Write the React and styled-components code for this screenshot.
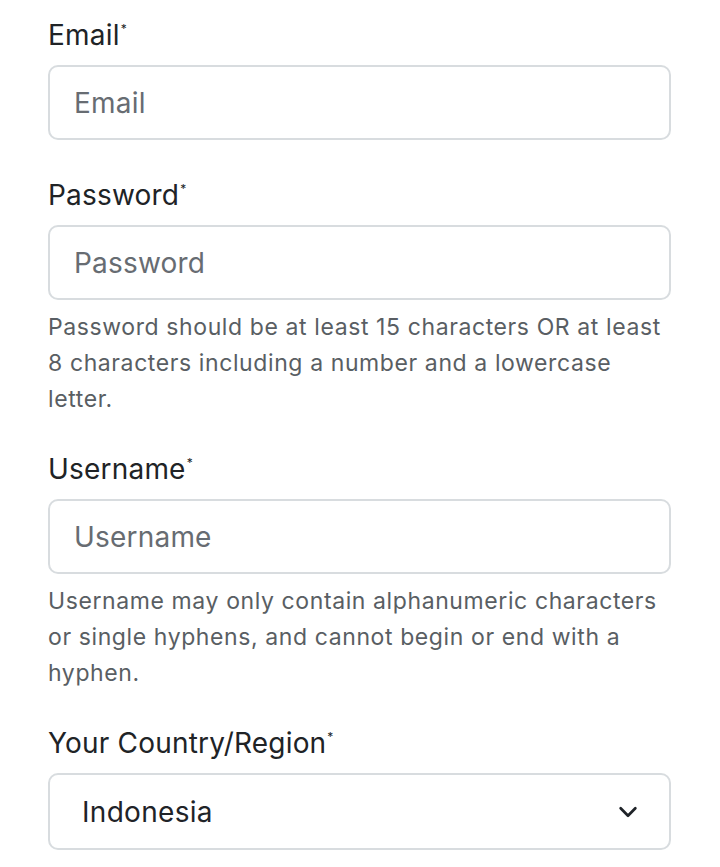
import React from 'react';
import styled, { createGlobalStyle } from 'styled-components';

const GlobalStyle = createGlobalStyle`
  body {
    margin: 0;
    background: #ffffff;
    font-family: Inter, "Noto Sans", sans-serif;
    color: #1f2328;
  }
`;

const Form = styled.form`
  width: 623px;
  padding: 18px 0 0 48px;
  display: flex;
  flex-direction: column;
`;

const Field = styled.div`
  display: flex;
  flex-direction: column;
  margin-bottom: ${p => (p.hint ? '35px' : '38px')};
`;

const Label = styled.label`
  font-size: 28px;
  line-height: 34px;
  letter-spacing: 0.2px;
  color: #202326;
  margin-bottom: 13px;
`;

const Star = styled.sup`
  font-size: 12px;
  vertical-align: top;
  position: relative;
  top: -6px;
  margin-left: 1px;
`;

const Input = styled.input`
  box-sizing: border-box;
  width: 100%;
  height: 75px;
  border: 2px solid #d8dcdf;
  border-radius: 10px;
  padding: 0 24px;
  font-family: inherit;
  font-size: 28px;
  letter-spacing: 0.2px;
  color: #1f2328;
  background: #fff;
  outline: none;

  &::placeholder {
    color: #676c72;
  }
`;

const Hint = styled.p`
  margin: 9px 0 0;
  font-size: 23px;
  line-height: 36px;
  letter-spacing: 0.6px;
  color: #595e63;
  white-space: nowrap;
`;

const SelectBox = styled.div`
  box-sizing: border-box;
  width: 100%;
  height: 77px;
  border: 2px solid #d8dcdf;
  border-radius: 10px;
  padding: 0 30px 0 32px;
  display: flex;
  align-items: center;
  justify-content: space-between;
  font-size: 28px;
  letter-spacing: 0.3px;
  color: #1f2328;
`;

const Chevron = () => (
  <svg width="22" height="22" viewBox="0 0 24 24" fill="none" stroke="#1f2328" strokeWidth="3" strokeLinecap="round" strokeLinejoin="round">
    <path d="M4 8l8 8 8-8" />
  </svg>
);

export default function App() {
  return (
    <>
      <GlobalStyle />
      <Form>
        <Field>
          <Label>Email<Star>*</Star></Label>
          <Input placeholder="Email" />
        </Field>
        <Field hint>
          <Label>Password<Star>*</Star></Label>
          <Input placeholder="Password" />
          <Hint>
            Password should be at least 15 characters OR at least<br />
            8 characters including a number and a lowercase<br />
            letter.
          </Hint>
        </Field>
        <Field hint>
          <Label>Username<Star>*</Star></Label>
          <Input placeholder="Username" />
          <Hint>
            Username may only contain alphanumeric characters<br />
            or single hyphens, and cannot begin or end with a<br />
            hyphen.
          </Hint>
        </Field>
        <Field>
          <Label>Your Country/Region<Star>*</Star></Label>
          <SelectBox>
            <span>Indonesia</span>
            <Chevron />
          </SelectBox>
        </Field>
      </Form>
    </>
  );
}
